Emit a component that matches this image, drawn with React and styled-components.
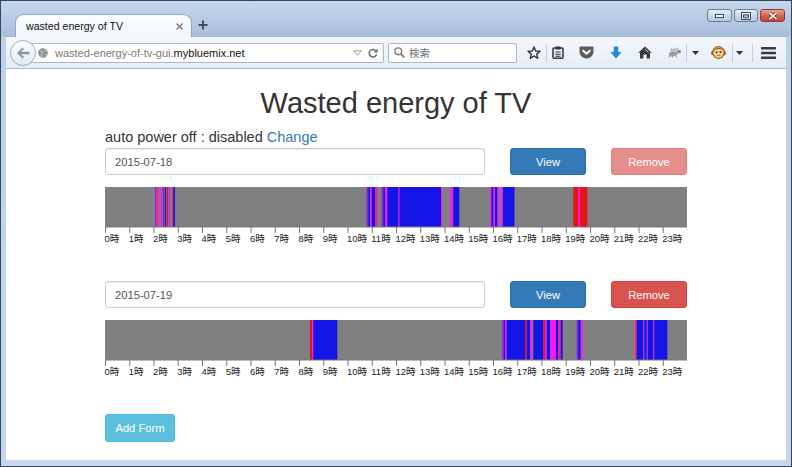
import React from "react";
import styled, { createGlobalStyle } from "styled-components";

const GlobalStyle = createGlobalStyle`
  html, body {
    margin: 0;
    padding: 0;
  }
  body {
    font-family: "Liberation Sans", Arial, sans-serif;
    background: #fff;
  }
`;

// stripe colours
const B = "#1414e6";
const M = "#f01ef0";
const R = "#e61414";
const P = "#8c1ee6";
const K = "#ff1a8c";

const BAR_LEFT = 105;
const BAR_WIDTH = 582;
const HOUR = BAR_WIDTH / 24;

const days = [
  {
    date: "2015-07-18",
    removeDisabled: true,
    stripes: [
      [155, 156, P], [156, 157, M], [157.3, 158.7, K], [160.7, 162, M],
      [162.7, 164, P], [164.7, 166, B], [166.7, 168, R], [168.7, 170, M],
      [172, 173.3, K], [173.3, 175, B],
      [366.7, 368.3, P], [368.3, 370, B], [370, 371.7, M], [371.7, 375.3, B],
      [375.3, 377.3, K], [381.7, 383.3, P], [383.3, 385, B], [385, 387.3, M],
      [387.3, 441, B], [398.3, 399.5, M], [441, 442.3, M],
      [450, 453.3, M], [453.3, 459.3, B],
      [490, 491.5, M], [491.5, 493.5, B], [493.5, 495, M], [495, 497.5, B],
      [497.5, 499, M], [501, 503, M], [503, 514.5, B],
      [573.3, 587.3, R], [578.3, 580, M],
    ],
  },
  {
    date: "2015-07-19",
    removeDisabled: false,
    stripes: [
      [310, 312, R], [312, 313.3, M], [313.3, 337.3, B],
      [502.3, 504, P], [504, 505, B], [505, 506.7, M], [506.7, 525, B],
      [525, 526.7, R], [526.7, 530, B], [530, 531.7, M], [533.3, 543.3, B],
      [543.3, 545, R], [545, 546.7, M], [546.7, 550, B], [550, 556, M],
      [556, 558.3, B], [558.3, 560.7, K], [560.7, 562.7, B],
      [576.7, 578.3, P], [578.3, 580.7, B], [580.7, 582.7, M],
      [635, 636.7, K], [636.7, 643.3, B], [643.3, 644.3, M], [644.3, 646.7, B],
      [646.7, 647.7, M], [647.7, 653.3, B], [653.3, 654.3, M], [654.3, 667.3, B],
    ],
  },
];

const hours = Array.from({ length: 24 }, (_, i) => i);

/* ---------- window frame ---------- */

const Window = styled.div`
  width: 792px;
  height: 467px;
  box-sizing: border-box;
  border: 1px solid #34465e;
  padding: 0 5px 6px;
  display: flex;
  flex-direction: column;
  background: linear-gradient(
    to bottom,
    #c4d6eb 0,
    #a7bfdc 35px,
    #bed2ea 36px,
    #c4d7ed 100%
  );
  overflow: hidden;
`;

const TitleBar = styled.div`
  height: 35px;
  display: flex;
  align-items: flex-end;
  padding-left: 9px;
  flex-shrink: 0;
`;

const Tab = styled.div`
  width: 177px;
  height: 23px;
  box-sizing: border-box;
  display: flex;
  align-items: center;
  padding: 0 8px 0 10px;
  background: linear-gradient(#fbfdff, #f1f6fc);
  border: 1px solid #8ea7c5;
  border-bottom: none;
  border-radius: 9px 9px 0 0;
  margin-bottom: -1px;
  position: relative;
  z-index: 1;
  font-size: 10.6px;
  color: #111;
`;

const TabTitle = styled.span`
  flex: 1;
  white-space: nowrap;
`;

const NewTab = styled.div`
  width: 22px;
  height: 23px;
  display: flex;
  align-items: center;
  justify-content: center;
`;

const Controls = styled.div`
  align-self: flex-start;
  margin: 8px 1px 0 auto;
  display: flex;
  gap: 2px;
`;

const WinButton = styled.div`
  width: ${(p) => p.w}px;
  height: 13px;
  box-sizing: border-box;
  border: 1px solid ${(p) => (p.close ? "#8a3a30" : "#667d9c")};
  border-radius: 3px;
  display: flex;
  align-items: center;
  justify-content: center;
  background: ${(p) =>
    p.close
      ? "linear-gradient(#eaa695, #d9664f 50%, #c4432f)"
      : "linear-gradient(#e8eff8, #cbd9ea 50%, #b5c8df)"};
`;

/* ---------- navigation toolbar ---------- */

const NavBar = styled.div`
  height: 33px;
  box-sizing: border-box;
  flex-shrink: 0;
  border-top: 1px solid #a5b9d1;
  border-bottom: 1px solid #a9bbd0;
  background: linear-gradient(#f4f8fc, #e5edf6);
  display: flex;
  align-items: center;
  padding-left: 4px;
`;

const BackButton = styled.div`
  width: 26px;
  height: 26px;
  box-sizing: border-box;
  flex-shrink: 0;
  border-radius: 50%;
  border: 1px solid #9cadc2;
  background: linear-gradient(#fdfeff, #e3eaf3);
  display: flex;
  align-items: center;
  justify-content: center;
  margin-right: -10px;
  position: relative;
  z-index: 1;
`;

const UrlBar = styled.div`
  width: 358px;
  height: 20px;
  box-sizing: border-box;
  flex-shrink: 0;
  border: 1px solid #a9b8cb;
  border-radius: 0 2px 2px 0;
  background: #fff;
  display: flex;
  align-items: center;
  padding: 0 5px 0 11px;
  font-size: 11px;
`;

const UrlText = styled.span`
  margin-left: 7px;
  flex: 1;
  color: #7a7a7a;
  white-space: nowrap;
  b {
    font-weight: 400;
    color: #111;
  }
`;

const UrlAction = styled.span`
  display: flex;
  margin-left: ${(p) => p.ml || 0}px;
`;

const SearchBox = styled.div`
  width: 129px;
  height: 20px;
  box-sizing: border-box;
  flex-shrink: 0;
  margin-left: 4px;
  border: 1px solid #a9b8cb;
  border-radius: 2px;
  background: #fff;
  display: flex;
  align-items: center;
  padding-left: 5px;
  font-family: "Noto Sans CJK JP", "Liberation Sans", sans-serif;
  font-size: 10.5px;
  color: #6e6e6e;
  span {
    margin-left: 4px;
  }
`;

const Slot = styled.div`
  width: ${(p) => p.w}px;
  height: 24px;
  flex-shrink: 0;
  margin-left: ${(p) => p.ml || 0}px;
  display: flex;
  align-items: center;
  justify-content: center;
`;

const Sep = styled.div`
  width: 1px;
  height: 18px;
  flex-shrink: 0;
  margin-left: ${(p) => p.ml || 0}px;
  background: #c1cddc;
`;

/* ---------- page content ---------- */

const Content = styled.main`
  flex: 1;
  background: #fff;
  overflow: hidden;
`;

const Container = styled.div`
  width: ${BAR_WIDTH}px;
  margin: 0 auto;
  padding-top: 18px;
  color: #333;
`;

const Title = styled.h1`
  margin: 0;
  font-size: 29px;
  line-height: 32px;
  font-weight: 400;
  text-align: center;
  color: #333;
`;

const Status = styled.div`
  margin-top: 9px;
  font-size: 14.5px;
  line-height: 18px;
  a {
    color: #337ab7;
    text-decoration: none;
  }
`;

const Day = styled.section`
  margin-top: ${(p) => (p.first ? 2 : 0)}px;
  margin-bottom: 36px;
`;

const FormRow = styled.div`
  display: flex;
  gap: 25px;
`;

const DateInput = styled.input`
  width: 380px;
  height: 27px;
  box-sizing: border-box;
  border: 1px solid #ccc;
  border-radius: 3px;
  padding: 0 9px;
  font-family: "Liberation Sans", Arial, sans-serif;
  font-size: 11.2px;
  color: #555;
  box-shadow: inset 0 1px 1px rgba(0, 0, 0, 0.075);
  outline: none;
`;

const variants = {
  primary: { bg: "#337ab7", border: "#2e6da4" },
  danger: { bg: "#d9534f", border: "#d43f3a" },
  info: { bg: "#5bc0de", border: "#46b8da" },
};

const Button = styled.button`
  width: ${(p) => p.w || 76}px;
  height: ${(p) => p.h || 27}px;
  box-sizing: border-box;
  border: 1px solid ${(p) => variants[p.variant].border};
  border-radius: 3px;
  background: ${(p) => variants[p.variant].bg};
  color: #fff;
  font-family: "Liberation Sans", Arial, sans-serif;
  font-size: 11.2px;
  padding: 0;
  opacity: ${(p) => (p.disabled ? 0.65 : 1)};
`;

const Chart = styled.svg`
  display: block;
  margin-top: 12px;
  overflow: visible;
  font-family: "Liberation Sans", "Noto Sans CJK JP", sans-serif;
`;

/* ---------- icons ---------- */

const CloseX = ({ size = 7, color = "#777", w = 1.4 }) => (
  <svg width={size} height={size} viewBox="0 0 7 7">
    <path d="M0.5 0.5 L6.5 6.5 M6.5 0.5 L0.5 6.5" stroke={color} strokeWidth={w} />
  </svg>
);

const Plus = () => (
  <svg width="10" height="10" viewBox="0 0 10 10">
    <path d="M5 0.5 V9.5 M0.5 5 H9.5" stroke="#3e4a58" strokeWidth="1.8" />
  </svg>
);

const BackArrow = () => (
  <svg width="14" height="12" viewBox="0 0 14 12">
    <path d="M6.5 0.5 L1 6 L6.5 11.5 L8 10 L5 7.2 H13.5 V4.8 H5 L8 2 Z" fill="#8796a8" />
  </svg>
);

const Globe = () => (
  <svg width="10" height="10" viewBox="0 0 10 10">
    <circle cx="5" cy="5" r="4.8" fill="#8f8f8f" />
    <path d="M2 3 Q4 2 4.5 4 Q3 5.5 4 7 L3 9 M6 1 Q7 3 8.5 3.5 M6.5 6 Q8 6 8.5 7.5" stroke="#d8d8d8" strokeWidth="1" fill="none" />
  </svg>
);

const HistoryDrop = () => (
  <svg width="9" height="6" viewBox="0 0 9 6">
    <path d="M0.8 0.8 H8.2 L4.5 5.2 Z" fill="none" stroke="#9a9a9a" strokeWidth="1" />
  </svg>
);

const Reload = () => (
  <svg width="10" height="10" viewBox="0 0 10 10">
    <path d="M8.2 3.2 A3.8 3.8 0 1 0 8.6 6.3" fill="none" stroke="#6d6d6d" strokeWidth="1.5" />
    <path d="M9.6 0.6 V4.6 H5.6 Z" fill="#6d6d6d" />
  </svg>
);

const Magnifier = () => (
  <svg width="11" height="11" viewBox="0 0 11 11">
    <circle cx="4.3" cy="4.3" r="3.4" fill="none" stroke="#7a7a7a" strokeWidth="1.4" />
    <path d="M6.8 6.8 L10.3 10.3" stroke="#7a7a7a" strokeWidth="1.8" />
  </svg>
);

const Star = () => (
  <svg width="14" height="14" viewBox="0 0 14 14">
    <path
      d="M7 1 L8.7 5.1 L13 5.3 L9.7 8.1 L10.8 12.4 L7 10 L3.2 12.4 L4.3 8.1 L1 5.3 L5.3 5.1 Z"
      fill="none"
      stroke="#333"
      strokeWidth="1.4"
      strokeLinejoin="round"
    />
  </svg>
);

const ReadingList = () => (
  <svg width="12" height="13" viewBox="0 0 12 13">
    <rect x="1" y="2" width="10" height="10.2" rx="1" fill="none" stroke="#333" strokeWidth="1.5" />
    <rect x="3.5" y="0.5" width="5" height="3" fill="#333" />
    <path d="M3.3 6 H8.7 M3.3 8.2 H8.7 M3.3 10.3 H8.7" stroke="#333" strokeWidth="1.1" />
  </svg>
);

const Pocket = () => (
  <svg width="15" height="13" viewBox="0 0 15 13">
    <path d="M1.5 0.5 H13.5 Q14.5 0.5 14.5 1.5 V6 A7 6.5 0 0 1 0.5 6 V1.5 Q0.5 0.5 1.5 0.5 Z" fill="#5c5c5c" />
    <path d="M4.2 4.7 L7.5 7.8 L10.8 4.7" fill="none" stroke="#fff" strokeWidth="1.9" strokeLinecap="round" strokeLinejoin="round" />
  </svg>
);

const Download = () => (
  <svg width="12" height="13" viewBox="0 0 12 13">
    <path d="M3.8 0.5 H8.2 V6 H11.6 L6 12.5 L0.4 6 H3.8 Z" fill="#1e8ad8" />
  </svg>
);

const Home = () => (
  <svg width="14" height="13" viewBox="0 0 14 13">
    <path d="M7 0.5 L13.8 6.8 H12 V12.5 H8.6 V8.6 H5.4 V12.5 H2 V6.8 H0.2 Z" fill="#3c3c3c" />
    <path d="M7 3 L10.5 6.3" stroke="#e9eef5" strokeWidth="0.9" />
  </svg>
);

const Bug = () => (
  <svg width="15" height="11" viewBox="0 0 15 11">
    <ellipse cx="6.5" cy="6.5" rx="4.8" ry="2.6" fill="#9a9a9a" transform="rotate(-20 6.5 6.5)" />
    <ellipse cx="9" cy="3" rx="3" ry="2" fill="#c6c6c6" transform="rotate(-30 9 3)" />
    <ellipse cx="5.5" cy="3.2" rx="2.6" ry="1.7" fill="#bdbdbd" transform="rotate(20 5.5 3.2)" />
    <circle cx="12.4" cy="4.6" r="1.6" fill="#7e7e7e" />
    <path d="M3 9 L1 10.5 M6 9 L5 10.8 M9 8.3 L9.5 10.5" stroke="#8a8a8a" strokeWidth="0.8" />
  </svg>
);

const DropArrow = () => (
  <svg width="7" height="4" viewBox="0 0 7 4">
    <path d="M0 0 H7 L3.5 4 Z" fill="#333" />
  </svg>
);

const Monkey = () => (
  <svg width="15" height="15" viewBox="0 0 15 15">
    <circle cx="2" cy="8" r="1.8" fill="#d79a3a" stroke="#6b4012" strokeWidth="0.6" />
    <circle cx="13" cy="8" r="1.8" fill="#d79a3a" stroke="#6b4012" strokeWidth="0.6" />
    <circle cx="7.5" cy="7.5" r="6" fill="#e0a23a" stroke="#6b4012" strokeWidth="0.8" />
    <path d="M3.2 7.5 Q3.4 4 7.5 4 Q11.6 4 11.8 7.5 Q11.5 12.6 7.5 12.6 Q3.5 12.6 3.2 7.5 Z" fill="#f6d49a" />
    <path d="M2.5 5 Q7.5 1 12.5 5 Q7.5 3 2.5 5 Z" fill="#8a5a1a" />
    <circle cx="5.6" cy="7.2" r="0.9" fill="#222" />
    <circle cx="9.4" cy="7.2" r="0.9" fill="#222" />
    <path d="M5.5 10 Q7.5 11.4 9.5 10" stroke="#7a4a12" strokeWidth="0.8" fill="none" />
  </svg>
);

const Hamburger = () => (
  <svg width="15" height="12" viewBox="0 0 15 12">
    <rect x="0" y="0" width="15" height="2.6" rx="0.6" fill="#3a3a3a" />
    <rect x="0" y="4.7" width="15" height="2.6" rx="0.6" fill="#3a3a3a" />
    <rect x="0" y="9.4" width="15" height="2.6" rx="0.6" fill="#3a3a3a" />
  </svg>
);

const MinGlyph = () => (
  <svg width="9" height="4" viewBox="0 0 9 4">
    <rect x="0.5" y="0.5" width="8" height="3" fill="#fff" stroke="#3a4a60" strokeWidth="1" />
  </svg>
);

const MaxGlyph = () => (
  <svg width="10" height="8" viewBox="0 0 10 8">
    <rect x="0.5" y="0.5" width="9" height="7" fill="#fff" stroke="#3a4a60" strokeWidth="1" />
    <rect x="2.5" y="2.8" width="5" height="3" fill="#aebfd6" stroke="#3a4a60" strokeWidth="1" />
  </svg>
);

const CloseGlyph = () => (
  <svg width="10" height="8" viewBox="0 0 10 8">
    <path d="M1.5 0.8 L8.5 7.2 M8.5 0.8 L1.5 7.2" stroke="#5a1f18" strokeWidth="3" />
    <path d="M1.5 0.8 L8.5 7.2 M8.5 0.8 L1.5 7.2" stroke="#fff" strokeWidth="1.8" />
  </svg>
);

/* ---------- usage chart ---------- */

const UsageChart = ({ stripes }) => (
  <Chart width={BAR_WIDTH} height="58" viewBox={`0 0 ${BAR_WIDTH} 58`}>
    <rect x="0" y="0" width={BAR_WIDTH} height="40" fill="#808080" />
    {stripes.map(([x0, x1, color], i) => (
      <rect key={i} x={x0 - BAR_LEFT} y="0" width={x1 - x0} height="40" fill={color} />
    ))}
    <line x1="0" y1="40" x2={BAR_WIDTH} y2="40" stroke="#7a7a7a" strokeWidth="1" />
    {hours.map((h) => (
      <g key={h}>
        <line x1={h * HOUR + 0.5} y1="40" x2={h * HOUR + 0.5} y2="46" stroke="#777" strokeWidth="1" />
        <text x={h * HOUR - 0.5} y="54.5" fontSize="9.5" fill="#222">
          {h}時
        </text>
      </g>
    ))}
  </Chart>
);

export default function App() {
  return (
    <>
      <GlobalStyle />
      <Window>
        <TitleBar>
          <Tab>
            <TabTitle>wasted energy of TV</TabTitle>
            <CloseX />
          </Tab>
          <NewTab>
            <Plus />
          </NewTab>
          <Controls>
            <WinButton w={25}>
              <MinGlyph />
            </WinButton>
            <WinButton w={24}>
              <MaxGlyph />
            </WinButton>
            <WinButton w={25} close>
              <CloseGlyph />
            </WinButton>
          </Controls>
        </TitleBar>

        <NavBar>
          <BackButton>
            <BackArrow />
          </BackButton>
          <UrlBar>
            <Globe />
            <UrlText>
              wasted-energy-of-tv-gui.<b>mybluemix.net</b>
            </UrlText>
            <UrlAction>
              <HistoryDrop />
            </UrlAction>
            <UrlAction ml={6}>
              <Reload />
            </UrlAction>
          </UrlBar>
          <SearchBox>
            <Magnifier />
            <span>検索</span>
          </SearchBox>
          <Slot w={25} ml={4}>
            <Star />
          </Slot>
          <Sep />
          <Slot w={22}>
            <ReadingList />
          </Slot>
          <Slot w={35}>
            <Pocket />
          </Slot>
          <Slot w={24}>
            <Download />
          </Slot>
          <Slot w={34}>
            <Home />
          </Slot>
          <Slot w={24}>
            <Bug />
          </Slot>
          <Sep />
          <Slot w={17}>
            <DropArrow />
          </Slot>
          <Slot w={28}>
            <Monkey />
          </Slot>
          <Sep />
          <Slot w={13}>
            <DropArrow />
          </Slot>
          <Sep ml={6} />
          <Slot w={31}>
            <Hamburger />
          </Slot>
        </NavBar>

        <Content>
          <Container>
            <Title>Wasted energy of TV</Title>
            <Status>
              auto power off : disabled <a href="#change">Change</a>
            </Status>
            {days.map((day, i) => (
              <Day key={day.date} first={i === 0}>
                <FormRow>
                  <DateInput type="text" value={day.date} readOnly />
                  <Button variant="primary">View</Button>
                  <Button variant="danger" disabled={day.removeDisabled}>
                    Remove
                  </Button>
                </FormRow>
                <UsageChart stripes={day.stripes} />
              </Day>
            ))}
            <Button variant="info" w={70} h={28}>
              Add Form
            </Button>
          </Container>
        </Content>
      </Window>
    </>
  );
}
